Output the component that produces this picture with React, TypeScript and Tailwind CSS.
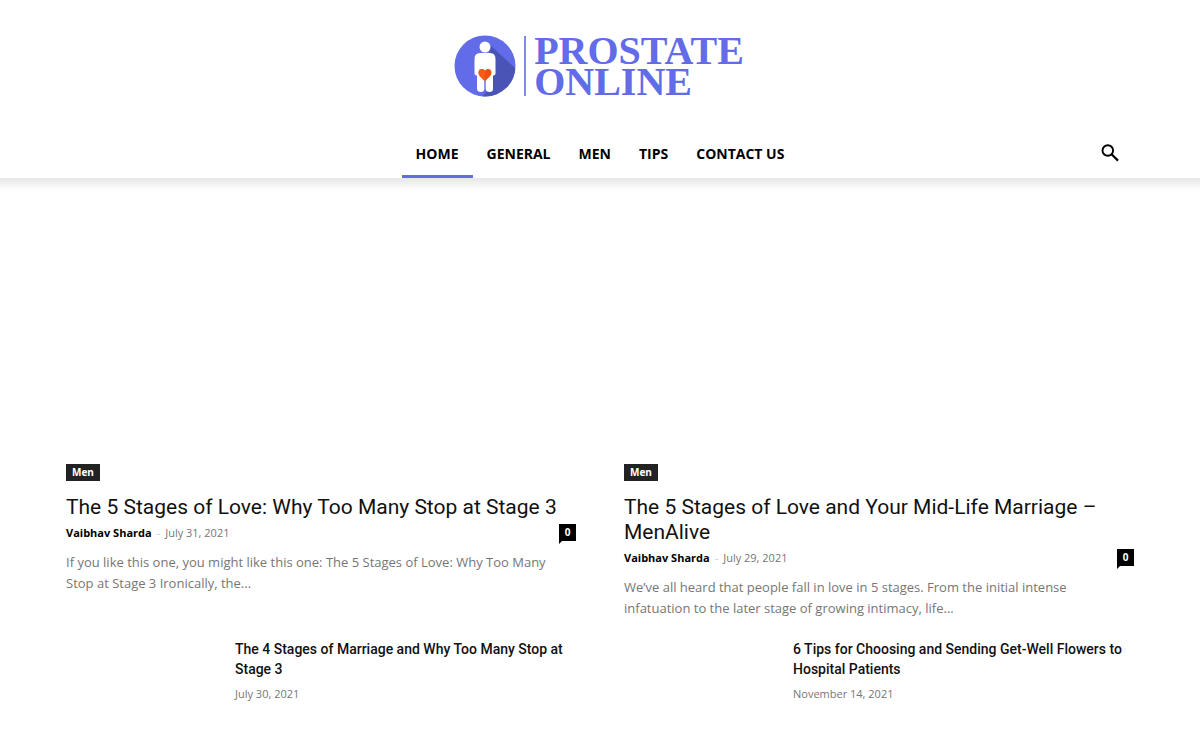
type Story = {
  title: string
  author: string
  date: string
  excerpt: string
  comments: number
}

const links = ["Home", "General", "Men", "Tips", "Contact Us"]

const stories: Story[] = [
  {
    title: "The 5 Stages of Love: Why Too Many Stop at Stage 3",
    author: "Vaibhav Sharda",
    date: "July 31, 2021",
    excerpt: "If you like this one, you might like this one: The 5 Stages of Love: Why Too Many Stop at Stage 3 Ironically, the...",
    comments: 0,
  },
  {
    title: "The 5 Stages of Love and Your Mid-Life Marriage – MenAlive",
    author: "Vaibhav Sharda",
    date: "July 29, 2021",
    excerpt: "We’ve all heard that people fall in love in 5 stages. From the initial intense infatuation to the later stage of growing intimacy, life...",
    comments: 0,
  },
]

const more = [
  { title: "The 4 Stages of Marriage and Why Too Many Stop at Stage 3", date: "July 30, 2021" },
  { title: "6 Tips for Choosing and Sending Get-Well Flowers to Hospital Patients", date: "November 14, 2021" },
]

const Logo = () => (
  <a href="#" className="flex items-center text-[#626be8]">
    <svg className="h-[62px] w-[62px]" viewBox="0 0 62 62" aria-hidden="true">
      <defs>
        <clipPath id="disc">
          <circle cx="31" cy="31" r="30.500" />
        </clipPath>
      </defs>
      <circle cx="31" cy="31" r="30.500" fill="#626be8" />
      <path d="M35 9 62 34V62H28L38 50Z" fill="#4a54b5" clipPath="url(#disc)" />
      <g fill="#fff">
        <circle cx="31" cy="12" r="5.500" />
        <path d="M26 18h10q5.500 0 5.500 6v14.500q0 2-2 2H39V54q0 3-3.500 3T31.700 54V42h-1.400v12q0 3-3.500 3T23 54V40.500h-.5q-2 0-2-2V24q0-6 5.500-6Z" />
      </g>
      <path d="M31 46c-3.500-3-6.500-5.500-6.500-8.500 0-4 5-4.500 6.500-1.500 1.500-3 6.500-2.500 6.500 1.500 0 3-3 5.500-6.500 8.500Z" fill="#f04e14" />
      <path d="M31 46c-3.500-3-6.500-5.500-6.500-8.500 0-4 5-4.500 6.500-1.500Z" fill="#fb5c14" />
    </svg>
    <span className="ml-2 h-[60px] w-0.5 bg-[#8189ec]" />
    <span className="ml-2 font-['Liberation_Serif',serif] text-[40px] leading-[31px] font-bold">
      PROSTATE
      <br />
      ONLINE
    </span>
  </a>
)

const Header = () => (
  <header className="relative bg-white after:absolute after:inset-x-0 after:top-full after:h-3 after:bg-linear-to-b after:from-black/10 after:to-transparent">
    <div className="flex h-[130px] items-center justify-center pt-0.5 pr-0.5">
      <Logo />
    </div>
    <div className="mx-auto grid w-full max-w-[1068px] grid-cols-[1fr_auto_1fr] items-center">
      <nav className="col-start-2 flex">
        {links.map((link, i) => (
          <a
            key={link}
            href="#"
            className={`h-12 border-b-3 px-3.5 text-sm leading-12 font-bold text-black uppercase ${i === 0 ? "border-[#626be8]" : "border-transparent"}`}
          >
            {link}
          </a>
        ))}
      </nav>
      <button type="button" aria-label="Search" className="mr-3.5 mb-0.5 justify-self-end">
        <svg className="h-5 w-5" viewBox="0 0 20 20" fill="none" stroke="#000" strokeWidth="1.900" aria-hidden="true">
          <circle cx="7.800" cy="7.500" r="5.300" />
          <path d="m11.600 11.300 6.400 6.300" strokeWidth="2.200" />
        </svg>
      </button>
    </div>
  </header>
)

const StoryCard = ({ title, author, date, excerpt, comments }: Story) => (
  <article>
    <a href="#" aria-label={title} className="block aspect-[2/1]" />
    <a href="#" className="block w-fit bg-[#222] px-1.5 text-[10px] leading-[17px] font-bold text-white">
      Men
    </a>
    <h3 className="mt-3.5 font-[Roboto,sans-serif] text-[21px] leading-[25px] text-[#111]">
      <a href="#">{title}</a>
    </h3>
    <div className="mt-1 flex items-center text-[11px] leading-[17px] text-[#767676]">
      <a href="#" className="font-bold text-black">{author}</a>
      <span className="mx-[5px] text-[#ccc]">-</span>
      <time>{date}</time>
      <a href="#" className="relative ml-auto w-[17px] bg-black text-center text-[10px] font-bold text-white">
        {comments}
        <span className="absolute top-full left-0 h-[3px] w-[3px] bg-black [clip-path:polygon(0_0,100%_0,0_100%)]" />
      </a>
    </div>
    <p className="mt-[11px] pr-5 text-[13px] leading-[21px] text-[#767676]">{excerpt}</p>
  </article>
)

export default function App() {
  return (
    <div className="bg-white font-['Open_Sans',sans-serif]">
      <Header />
      <main className="mx-auto grid w-full max-w-[1068px] grid-cols-2 gap-x-12 gap-y-5 pt-[31px]">
        {stories.map((story) => (
          <StoryCard key={story.title} {...story} />
        ))}
        {more.map(({ title, date }) => (
          <article key={title} className="flex gap-5">
            <a href="#" aria-label={title} className="h-24 w-[149px] shrink-0" />
            <div>
              <h3 className="font-[Roboto,sans-serif] text-sm leading-5 font-medium text-[#111]">
                <a href="#">{title}</a>
              </h3>
              <time className="mt-1.5 block text-[11px] leading-[17px] text-[#767676]">{date}</time>
            </div>
          </article>
        ))}
      </main>
    </div>
  )
}
